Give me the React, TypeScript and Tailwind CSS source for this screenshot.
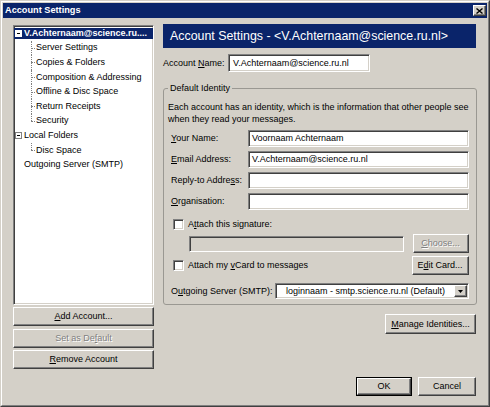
import type { ReactNode } from 'react';

const raised =
  'bg-[#d4d0c8] border border-t-white border-l-white border-r-[#404040] border-b-[#404040] shadow-[inset_-1px_-1px_0_#808080]';
const sunken =
  'border border-t-[#808080] border-l-[#808080] border-r-white border-b-white shadow-[inset_1px_1px_0_#404040,inset_-1px_-1px_0_#d4d0c8]';

const U = ({ children }: { children: ReactNode }) => (
  <span className="underline decoration-1 underline-offset-[1px]">{children}</span>
);

type BtnProps = {
  children: ReactNode;
  className?: string;
  disabled?: boolean;
};

const Btn = ({ children, className = '', disabled = false }: BtnProps) => (
  <div
    className={`flex items-center justify-center ${raised} ${
      disabled ? 'text-[#808080] [text-shadow:1px_1px_0_#fff]' : 'text-black'
    } ${className}`}
  >
    {children}
  </div>
);

const Check = () => <div className={`h-[11px] w-[11px] shrink-0 bg-white ${sunken}`} />;

const MinusBox = ({ onDark = false }: { onDark?: boolean }) => (
  <span
    className={`ml-px mr-[2px] flex h-[7px] w-[7px] items-center justify-center border bg-white ${
      onDark ? 'border-white' : 'border-[#808080]'
    }`}
  >
    <span className="h-px w-[3px] bg-black" />
  </span>
);

const ChildRow = ({ label, last = false }: { label: string; last?: boolean }) => (
  <div className="flex h-[14.6px]">
    <div className="w-[17px]" />
    <div className="relative w-[4px]">
      <span
        className={`absolute left-0 top-0 border-l border-dotted border-[#808080] ${last ? 'h-1/2' : 'h-full'}`}
      />
      <span className="absolute left-0 top-1/2 w-full border-t border-dotted border-[#808080]" />
    </div>
    <span className="self-center pl-px">{label}</span>
  </div>
);

const accountChildren = [
  'Server Settings',
  'Copies & Folders',
  'Composition & Addressing',
  'Offline & Disc Space',
  'Return Receipts',
  'Security',
];

const identityRows: { label: ReactNode; value: string }[] = [
  { label: <><U>Y</U>our Name:</>, value: 'Voornaam Achternaam' },
  { label: <><U>E</U>mail Address:</>, value: 'V.Achternaam@science.ru.nl' },
  { label: <>Reply-to Addre<U>s</U>s:</>, value: '' },
  { label: <><U>O</U>rganisation:</>, value: '' },
];

export default function App() {
  return (
    <div
      className="h-[407px] w-[490px] border border-t-[#d4d0c8] border-l-[#d4d0c8] border-r-[#404040] border-b-[#404040] bg-[#d4d0c8] text-[9px] leading-[11px] text-black"
      style={{ fontFamily: '"Liberation Sans", Arial, sans-serif' }}
    >
      <div className="h-full border border-t-white border-l-white border-r-[#808080] border-b-[#808080] p-px">
        {/* title bar */}
        <div className="flex h-[15px] items-center justify-between bg-[#0a246a] pl-[2px] pr-px">
          <span className="text-[9.2px] font-bold text-white">Account Settings</span>
          <div className={`flex h-[11px] w-[13px] items-center justify-center ${raised}`}>
            <svg width="7" height="6" viewBox="0 0 7 6">
              <path d="M0.5 0.5 L6.5 5.5 M6.5 0.5 L0.5 5.5" stroke="#000" strokeWidth="1.4" />
            </svg>
          </div>
        </div>

        <div className="flex pl-[10px] pt-[6px]">
          {/* left column */}
          <div className="mt-px w-[141px]">
            <div className={`h-[280px] overflow-hidden bg-white ${sunken}`}>
              <div className="flex h-[14.6px] items-center">
                <div className="flex h-[11px] w-full items-center bg-[#0a246a] font-bold text-white">
                  <MinusBox onDark />
                  <span className="whitespace-nowrap">V.Achternaam@science.ru....</span>
                </div>
              </div>
              {accountChildren.map((c, i) => (
                <ChildRow key={c} label={c} last={i === accountChildren.length - 1} />
              ))}
              <div className="flex h-[14.6px] items-center">
                <MinusBox />
                <span>Local Folders</span>
              </div>
              <ChildRow label="Disc Space" last />
              <div className="flex h-[14.6px] items-center pl-[10px]">Outgoing Server (SMTP)</div>
            </div>
            <Btn className="mt-[2px] h-[19px] w-full">
              <U>A</U>dd Account...
            </Btn>
            <Btn className="mt-[3px] h-[19px] w-full" disabled>
              Set as De<U>f</U>ault
            </Btn>
            <Btn className="mt-[2px] h-[19px] w-full">
              <U>R</U>emove Account
            </Btn>
          </div>

          {/* right column */}
          <div className="ml-[9px] w-[313px]">
            <div className="flex h-[24px] items-center bg-[#0a246a] pl-[7px] text-[12.4px] text-white">
              Account Settings - &lt;V.Achternaam@science.ru.nl&gt;
            </div>

            <div className="mt-[6px] flex h-[18px] items-center">
              <span className="w-[65px]">
                Account <U>N</U>ame:
              </span>
              <div className={`flex h-full w-[142px] items-center bg-white pl-[4px] ${sunken}`}>
                V.Achternaam@science.ru.nl
              </div>
            </div>

            <fieldset className="mt-[10px] rounded-[3px] border border-[#9a9892] pb-[5px] pl-[4px] pr-[7px]">
              <legend className="px-[2px] leading-[12px]">Default Identity</legend>
              <div className="mt-[7px] whitespace-nowrap leading-[12px]">
                <div>Each account has an identity, which is the information that other people see</div>
                <div>when they read your messages.</div>
              </div>

              <div className="mt-[5px] flex flex-col gap-[4px] pl-[3px]">
                {identityRows.map((r, i) => (
                  <div key={i} className="flex h-[17px] items-center">
                    <span className="w-[77px] whitespace-nowrap">{r.label}</span>
                    <div className={`flex h-full flex-1 items-center bg-white pl-[3px] ${sunken}`}>{r.value}</div>
                  </div>
                ))}
              </div>

              <div className="mt-[9px] flex h-[11px] items-center pl-[5px]">
                <Check />
                <span className="ml-[4px]">
                  A<U>t</U>tach this signature:
                </span>
              </div>

              <div className="mt-[4px] flex h-[19px] items-center pl-[21px]">
                <div className={`h-[16px] w-[215px] bg-[#d4d0c8] ${sunken}`} />
                <Btn className="ml-auto h-[19px] w-[56px]" disabled>
                  <U>C</U>hoose...
                </Btn>
              </div>

              <div className="mt-[3px] flex h-[19px] items-center pl-[5px]">
                <Check />
                <span className="ml-[4px]">
                  Attach my <U>v</U>Card to messages
                </span>
                <Btn className="ml-auto h-[19px] w-[57px]">
                  E<U>d</U>it Card...
                </Btn>
              </div>

              <div className="mt-[8px] flex h-[16px] items-center pl-[3px]">
                <span className="w-[104px] whitespace-nowrap">
                  O<U>u</U>tgoing Server (SMTP):
                </span>
                <div className={`flex h-full flex-1 items-center bg-white pl-[10px] pr-px ${sunken}`}>
                  <span className="whitespace-nowrap">loginnaam - smtp.science.ru.nl (Default)</span>
                  <div className={`ml-auto flex h-[12px] w-[13px] items-center justify-center ${raised}`}>
                    <svg width="5" height="3" viewBox="0 0 5 3">
                      <path d="M0 0 H5 L2.5 3 Z" fill="#000" />
                    </svg>
                  </div>
                </div>
              </div>
            </fieldset>

            <div className="mt-[9px] flex justify-end">
              <Btn className="h-[20px] w-[91px]">
                <U>M</U>anage Identities...
              </Btn>
            </div>

            <div className="mt-[43px] flex justify-end gap-[6px]">
              <div className="border border-black">
                <Btn className="h-[17px] w-[54px]">OK</Btn>
              </div>
              <Btn className="h-[19px] w-[58px]">Cancel</Btn>
            </div>
          </div>
        </div>
      </div>
    </div>
  );
}
